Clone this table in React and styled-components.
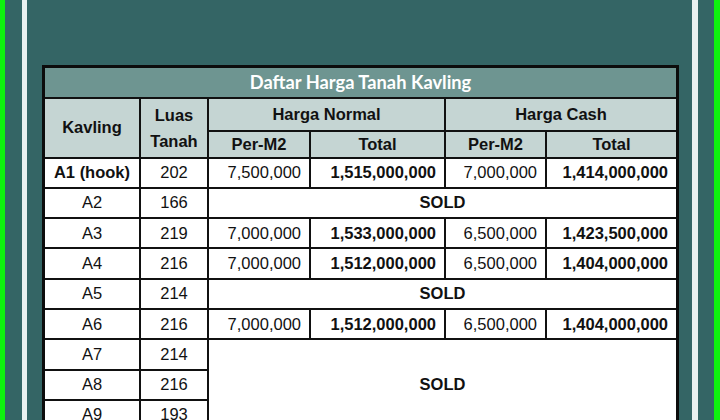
import React from "react";
import styled, { createGlobalStyle } from "styled-components";

const GlobalStyle = createGlobalStyle`
  html, body {
    margin: 0;
    padding: 0;
    overflow: hidden;
    background: #346565;
  }
  * { box-sizing: border-box; }
`;

const rows = [
  { kavling: "A1 (hook)", luas: 202, normal: ["7,500,000", "1,515,000,000"], cash: ["7,000,000", "1,414,000,000"], hook: true },
  { kavling: "A2", luas: 166, sold: 1 },
  { kavling: "A3", luas: 219, normal: ["7,000,000", "1,533,000,000"], cash: ["6,500,000", "1,423,500,000"] },
  { kavling: "A4", luas: 216, normal: ["7,000,000", "1,512,000,000"], cash: ["6,500,000", "1,404,000,000"] },
  { kavling: "A5", luas: 214, sold: 1 },
  { kavling: "A6", luas: 216, normal: ["7,000,000", "1,512,000,000"], cash: ["6,500,000", "1,404,000,000"] },
  { kavling: "A7", luas: 214, sold: 3 },
  { kavling: "A8", luas: 216 },
  { kavling: "A9", luas: 193 },
];

const App = () => {
  return (
    <>
      <GlobalStyle />
      <Frame>
        <Panel>
          <PriceTable>
            <colgroup>
              <col style={{ width: "96.5px" }} />
              <col style={{ width: "68px" }} />
              <col style={{ width: "102px" }} />
              <col style={{ width: "135px" }} />
              <col style={{ width: "101px" }} />
              <col style={{ width: "131.5px" }} />
            </colgroup>
            <thead>
              <tr>
                <TitleCell colSpan={6}>Daftar Harga Tanah Kavling</TitleCell>
              </tr>
              <HeadRow $h={33}>
                <HeadCell rowSpan={2}>Kavling</HeadCell>
                <HeadCell rowSpan={2} $tight>
                  Luas
                  <br />
                  Tanah
                </HeadCell>
                <HeadCell colSpan={2}>Harga Normal</HeadCell>
                <HeadCell colSpan={2}>Harga Cash</HeadCell>
              </HeadRow>
              <HeadRow $h={27}>
                <HeadCell>Per-M2</HeadCell>
                <HeadCell>Total</HeadCell>
                <HeadCell>Per-M2</HeadCell>
                <HeadCell>Total</HeadCell>
              </HeadRow>
            </thead>
            <tbody>
              {rows.map((r) => (
                <DataRow key={r.kavling}>
                  <Cell $bold={r.hook}>{r.kavling}</Cell>
                  <Cell>{r.luas}</Cell>
                  {r.sold && (
                    <SoldCell colSpan={4} rowSpan={r.sold}>
                      SOLD
                    </SoldCell>
                  )}
                  {r.normal && (
                    <>
                      <Cell $right>{r.normal[0]}</Cell>
                      <Cell $right $bold>{r.normal[1]}</Cell>
                      <Cell $right>{r.cash[0]}</Cell>
                      <Cell $right $bold>{r.cash[1]}</Cell>
                    </>
                  )}
                </DataRow>
              ))}
            </tbody>
          </PriceTable>
        </Panel>
      </Frame>
    </>
  );
};

export default App;

const Frame = styled.div`
  min-height: 100vh;
  background: #346565;
  border-left: 5px solid #0ef00e;
  border-right: 6px solid #0ef00e;
  padding: 0 16px 0 17px;
  display: flex;
`;

const Panel = styled.div`
  flex: 1;
  border-left: 5px solid #e9f0ef;
  border-right: 6px solid #e9f0ef;
  padding: 65px 13px 0 15px;
`;

const PriceTable = styled.table`
  width: 637px;
  table-layout: fixed;
  border-collapse: collapse;
  border: 3px solid #0c0c0c;
  background: #ffffff;
  font-family: "Liberation Sans", Arial, sans-serif;
  color: #111;
`;

const TitleCell = styled.th`
  height: 31px;
  padding: 0;
  background: #6e9591;
  color: #ffffff;
  font-family: Lato, "Open Sans", sans-serif;
  font-weight: 700;
  font-size: 18.3px;
  text-align: center;
  border-bottom: 1px solid #2d3d3c;
`;

const HeadRow = styled.tr`
  height: ${({ $h }) => $h}px;
`;

const HeadCell = styled.th`
  padding: 0;
  background: #c5d5d3;
  border: 2px solid #111;
  font-size: 16.5px;
  font-weight: 700;
  text-align: center;
  line-height: ${({ $tight }) => ($tight ? "26px" : "normal")};
`;

const DataRow = styled.tr`
  height: 30.3px;
`;

const Cell = styled.td`
  padding: 0 8px;
  border: 2px solid #111;
  font-size: 16.5px;
  font-weight: ${({ $bold }) => ($bold ? 700 : 400)};
  text-align: ${({ $right }) => ($right ? "right" : "center")};
  white-space: nowrap;
`;

const SoldCell = styled.td`
  padding: 0;
  border: 2px solid #111;
  border-right-color: #555;
  font-size: 16.5px;
  font-weight: 700;
  text-align: center;
`;
